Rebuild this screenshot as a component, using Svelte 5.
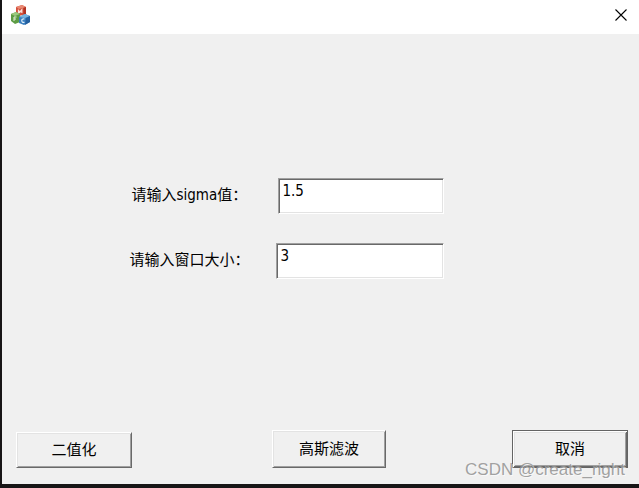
<script lang="ts">
  let sigma = $state('1.5');
  let windowSize = $state('3');
  let open = $state(true);

  function close() {
    open = false;
  }
</script>

<div class="desktop">
  {#if open}
    <div class="dialog" role="dialog" aria-label="MFC">
      <header>
        <svg class="logo" width="20" height="21" viewBox="0 0 20 21" aria-hidden="true">
          <path d="M5 2 L11 0 L15 2 V9 L8 11 L5 9 Z" fill="#d4503c" />
          <path d="M5 2 L11 0 L15 2 L8 4 Z" fill="#e98a74" />
          <path d="M12.500 3 L15 2 V9 L12.500 10 Z" fill="#b03222" />
          <path d="M7.500 8.500 V5.500 L9 7 L10.800 4.800 V8" fill="none" stroke="#fbe3dd" stroke-width="1.200" />
          <path d="M0 9 L5 7 L9 9 V17 L4 19 L0 16 Z" fill="#5d9c44" />
          <path d="M0 9 L5 7 L9 9 L4 11 Z" fill="#9bc97f" />
          <path d="M3 16 V12 H5.500 M3 14 H5" fill="none" stroke="#e2f2d9" stroke-width="1" />
          <path d="M8 12 L14 9 L19 11 V17 L13 20 L8 18 Z" fill="#3a7fc0" />
          <path d="M8 12 L14 9 L19 11 L14 13 Z" fill="#77b4df" />
          <path d="M15 13 L19 11 V17 L14 20 Z" fill="#235f9f" />
          <path d="M13.500 14 Q10.500 13.500 10.800 15.800 Q11 18 13.500 17.200" fill="none" stroke="#e3f1fb" stroke-width="1.200" />
        </svg>
        <button class="close" type="button" aria-label="关闭" onclick={close}>
          <svg width="12" height="12" viewBox="0 0 12 12" aria-hidden="true">
            <path d="M0.500 0.500 L11.500 11.500 M11.500 0.500 L0.500 11.500" stroke="#000" stroke-width="1.100" />
          </svg>
        </button>
      </header>

      <form onsubmit={(e) => e.preventDefault()}>
        <div class="fields">
          <div class="row">
            <label for="sigma">请输入sigma值：</label>
            <input id="sigma" class="narrow" type="text" bind:value={sigma} />
          </div>
          <div class="row">
            <label for="size">请输入窗口大小：</label>
            <input id="size" type="text" bind:value={windowSize} />
          </div>
        </div>

        <footer>
          <button class="btn binary" type="button">二值化</button>
          <button class="btn gauss" type="button">高斯滤波</button>
          <button class="btn default" type="button" onclick={close}>取消</button>
        </footer>
      </form>

      <span class="watermark">CSDN @create_right</span>
    </div>
  {/if}
</div>

<style>
  :global(body) {
    background: #171516;
  }

  .desktop {
    display: flex;
    box-sizing: border-box;
    min-height: 100vh;
    padding: 0 0 4px 2px;
    font-family: Tahoma, "DejaVu Sans Condensed", "Noto Sans CJK SC", sans-serif;
    font-size: 15px;
    line-height: 20px;
    color: #000;
  }

  .dialog {
    position: relative;
    display: flex;
    flex: 1;
    flex-direction: column;
    background: #f0f0f0;
  }

  header {
    display: flex;
    align-items: center;
    justify-content: space-between;
    height: 34px;
    padding: 0 4px 0 9px;
    background: #fff;
  }

  .logo {
    margin-bottom: 4px;
  }

  .close {
    display: flex;
    align-items: center;
    justify-content: center;
    width: 28px;
    height: 28px;
    margin-bottom: 4px;
    padding: 0;
    border: none;
    background: none;
  }

  form {
    display: flex;
    flex: 1;
    flex-direction: column;
  }

  .fields {
    display: flex;
    flex: 1;
    flex-direction: column;
    justify-content: center;
    gap: 29px;
    padding: 0 20% 8px;
  }

  .row {
    display: flex;
    align-items: center;
    justify-content: space-between;
    max-width: 315px;
  }

  label {
    width: 120px;
    margin-bottom: 2px;
    text-align: center;
    white-space: nowrap;
  }

  input {
    box-sizing: border-box;
    width: 168px;
    height: 36px;
    padding: 0 3px 10px;
    border: 1px solid;
    border-color: #a0a0a0 #fff #fff #a0a0a0;
    background: #fff;
    box-shadow: inset 1px 1px #696969, inset -1px -1px #e3e3e3;
    font: inherit;
    color: inherit;
    outline: none;
  }

  .narrow {
    width: 166px;
  }

  footer {
    display: flex;
    align-items: flex-end;
    justify-content: space-between;
    padding: 0 11px 16px 14px;
  }

  .btn {
    width: 116px;
    height: 38px;
    padding: 0;
    border: 1px solid;
    border-color: #fff #696969 #696969 #fff;
    background: #f0f0f0;
    box-shadow: inset 1px 1px #e3e3e3, inset -1px -1px #a0a0a0;
    font: inherit;
    color: inherit;
  }

  .binary {
    height: 36px;
  }

  .gauss {
    width: 114px;
    margin-left: 14px;
  }

  .default {
    border-color: #646464;
    box-shadow: inset 1px 1px #fff, inset -1px -1px #696969, inset 2px 2px #e3e3e3, inset -2px -2px #a0a0a0;
  }

  /* blog stamp lying over the lower right corner */
  .watermark {
    position: absolute;
    right: 14px;
    bottom: 4px;
    font-family: "Liberation Sans", Arial, sans-serif;
    font-size: 17px;
    color: rgba(150, 150, 150, 0.9);
    text-shadow: 1px 1px rgba(255, 255, 255, 0.6);
    pointer-events: none;
  }
</style>
